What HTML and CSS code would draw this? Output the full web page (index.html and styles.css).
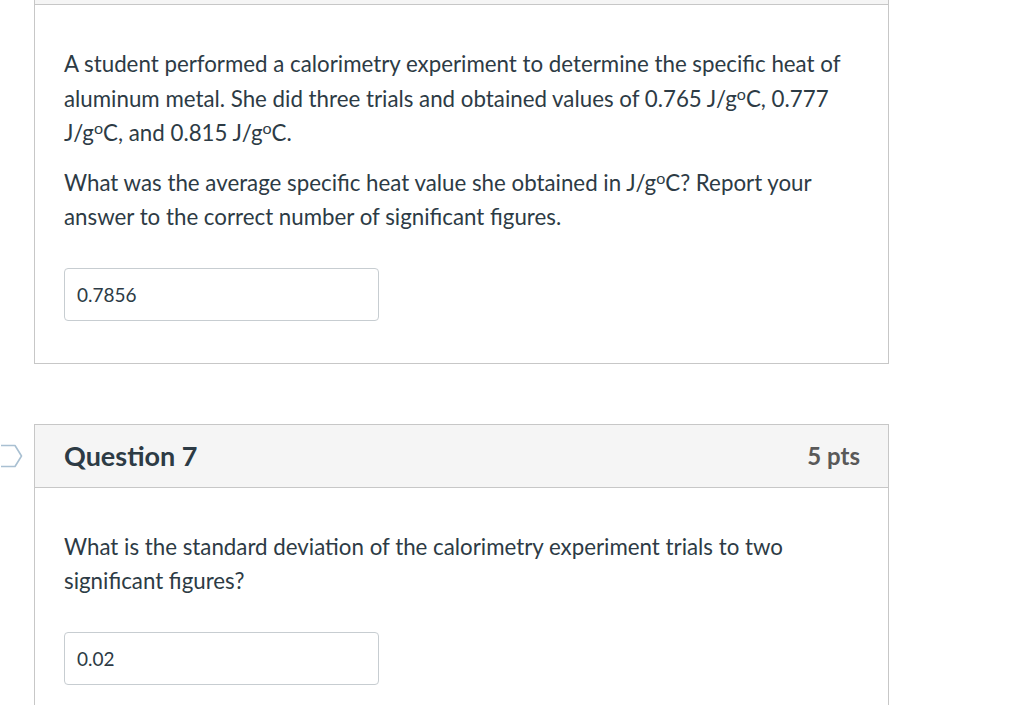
FILE: index.html
```html
<!DOCTYPE html>
<html>
<head>
<meta charset="utf-8">
<link rel="stylesheet" href="styles.css">
</head>
<body>
<div class="page">
  <div class="question">
    <div class="q-header q-header-cut"></div>
    <div class="q-body">
      <p>A student performed a calorimetry experiment to determine the specific heat of aluminum metal. She did three trials and obtained values of 0.765 J/g<span class="deg">o</span>C, 0.777 J/g<span class="deg">o</span>C, and 0.815 J/g<span class="deg">o</span>C.</p>
      <p>What was the average specific heat value she obtained in J/g<span class="deg">o</span>C? Report your answer to the correct number of significant figures.</p>
      <div class="answer">0.7856</div>
    </div>
  </div>

  <div class="question question-2">
    <svg class="flag" width="24" height="26" viewBox="0 0 24 26" aria-hidden="true">
      <path d="M-6 1.5 H14 L20.5 12 L14 22.5 H-6" fill="none" stroke="#a9c0d2" stroke-width="1.6" stroke-linejoin="round"/>
    </svg>
    <div class="q-header">
      <span class="q-title">Question 7</span>
      <span class="q-points">5 pts</span>
    </div>
    <div class="q-body">
      <p>What is the standard deviation of the calorimetry experiment trials to two significant figures?</p>
      <div class="answer">0.02</div>
    </div>
  </div>
</div>
</body>
</html>
```

FILE: styles.css
```css
html, body {
  margin: 0;
  padding: 0;
  background: #ffffff;
}

body {
  font-family: Lato, "Open Sans", sans-serif;
  color: #2d3b45;
  overflow: hidden;
  height: 705px;
}

.page {
  padding-left: 34px;
  width: 855px;
}

.question {
  position: relative;
  border: 1px solid #c7c7c7;
  border-top: none;
}

.question-2 {
  margin-top: 60px;
  border-top: 1px solid #c7c7c7;
}

.q-header {
  background: #f5f5f5;
  border-bottom: 1px solid #c7c7c7;
  height: 62px;
  display: flex;
  align-items: center;
  justify-content: space-between;
  padding: 0 28px 0 29px;
}

.q-header-cut {
  height: 4px;
}

.q-title {
  font-size: 27px;
  font-weight: 700;
  color: #2d3b45;
}

.q-points {
  font-size: 24px;
  font-weight: 700;
  color: #595959;
}

.q-body {
  padding: 42px 29px 42px 29px;
}

.q-body p {
  margin: 0 0 15px 0;
  font-size: 22.3px;
  line-height: 34.5px;
}

.deg {
  display: inline-block;
  font-size: 0.72em;
  line-height: 1;
  vertical-align: 0.42em;
}

.answer {
  margin-top: 33px;
  width: 301px;
  height: 51px;
  border: 1px solid #c7cdd1;
  border-radius: 4px;
  box-sizing: content-box;
  padding: 0 0 0 12px;
  display: flex;
  align-items: center;
  font-size: 19px;
  color: #2d3b45;
}

.flag {
  position: absolute;
  left: -34px;
  top: 19px;
}
```
